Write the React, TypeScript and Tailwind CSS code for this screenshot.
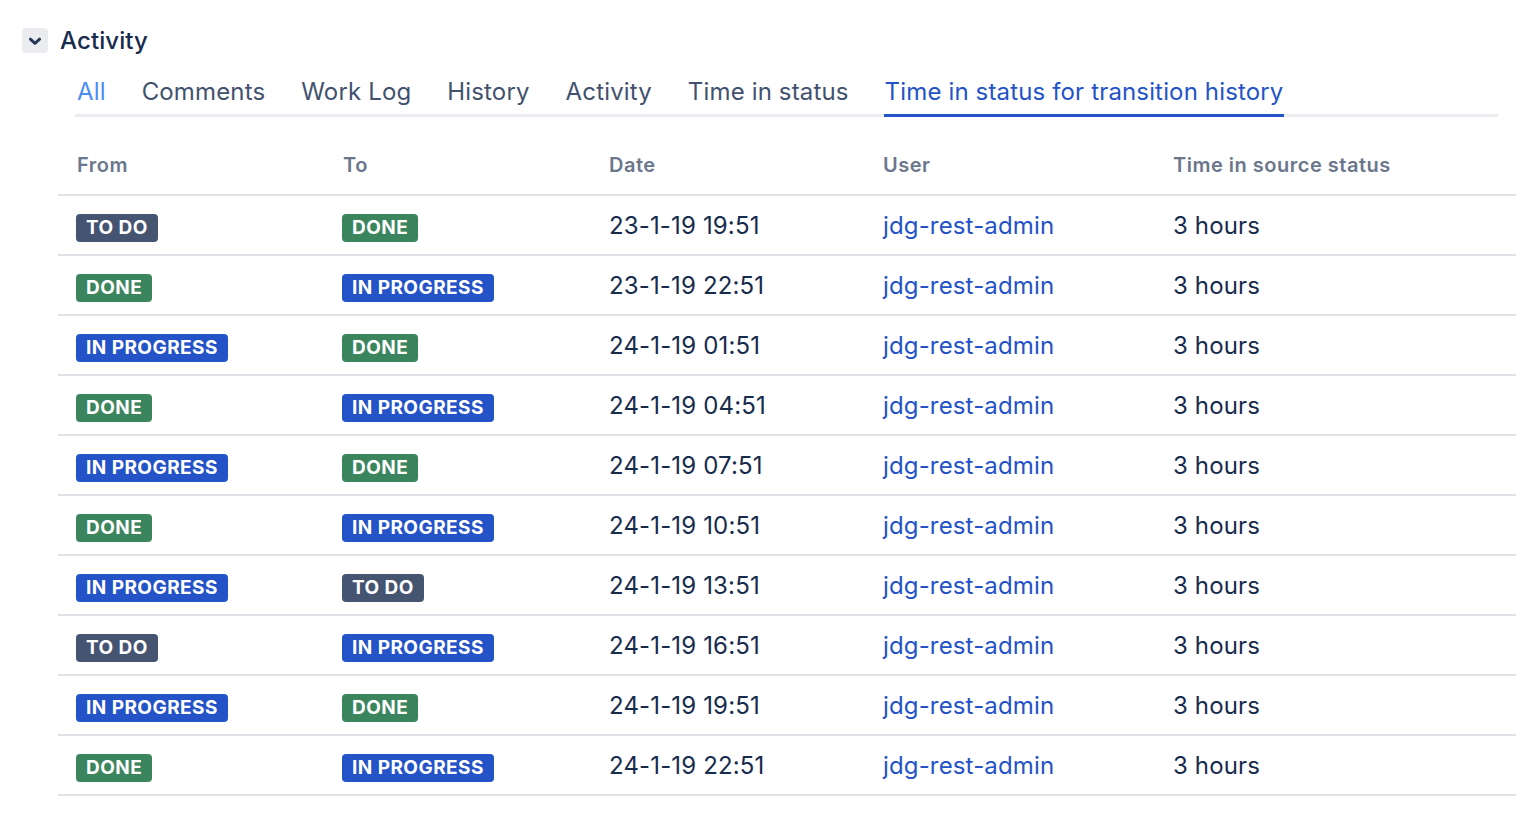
import React, { useState } from 'react';

type Status = 'TO DO' | 'DONE' | 'IN PROGRESS';

interface Transition {
  from: Status;
  to: Status;
  date: string;
}

const TABS = ['All', 'Comments', 'Work Log', 'History', 'Activity', 'Time in status', 'Time in status for transition history'];

const ROWS: Transition[] = [
  { from: 'TO DO', to: 'DONE', date: '23-1-19 19:51' },
  { from: 'DONE', to: 'IN PROGRESS', date: '23-1-19 22:51' },
  { from: 'IN PROGRESS', to: 'DONE', date: '24-1-19 01:51' },
  { from: 'DONE', to: 'IN PROGRESS', date: '24-1-19 04:51' },
  { from: 'IN PROGRESS', to: 'DONE', date: '24-1-19 07:51' },
  { from: 'DONE', to: 'IN PROGRESS', date: '24-1-19 10:51' },
  { from: 'IN PROGRESS', to: 'TO DO', date: '24-1-19 13:51' },
  { from: 'TO DO', to: 'IN PROGRESS', date: '24-1-19 16:51' },
  { from: 'IN PROGRESS', to: 'DONE', date: '24-1-19 19:51' },
  { from: 'DONE', to: 'IN PROGRESS', date: '24-1-19 22:51' },
];

const badgeColor: Record<Status, string> = {
  'TO DO': 'bg-[#455470]',
  DONE: 'bg-[#3b855e]',
  'IN PROGRESS': 'bg-[#2353c7]',
};

const Lozenge: React.FC<{ status: Status }> = ({ status }) => (
  <span
    className={`inline-flex items-center h-[28px] px-[10px] rounded-[4px] text-white text-[19px] font-bold leading-none tracking-[0.45px] ${badgeColor[status]}`}
  >
    {status}
  </span>
);

const cols = 'grid grid-cols-[266px_266px_274px_290px_1fr]';

export default function App() {
  const [active, setActive] = useState(TABS.length - 1);

  return (
    <div className="w-[1540px] h-[840px] bg-white font-['Inter',sans-serif] text-[#172b4d]">
      {/* Section header */}
      <div className="flex items-center gap-3 pl-[22px] pt-[28px]">
        <button className="w-[26px] h-[25px] rounded-[4px] bg-[#ebecf0] flex items-center justify-center text-[#253858]">
          <svg width="22" height="22" viewBox="0 0 24 24" fill="none" stroke="currentColor" strokeWidth={3.2} strokeLinecap="round" strokeLinejoin="round">
            <path d="M7 10l5 4.5 5-4.5" />
          </svg>
        </button>
        <h2 className="text-[24px] font-medium leading-[25px] tracking-[0.1px]">Activity</h2>
      </div>

      {/* Tabs */}
      <div className="ml-[75px] mr-[42px] mt-[24px] border-b-[3px] border-[#ebecf0] flex gap-[36px] pl-[2px]">
        {TABS.map((tab, i) => (
          <button
            key={tab}
            onClick={() => setActive(i)}
            className={`relative pb-[7px] text-[24px] leading-[30px] tracking-[0.15px] whitespace-nowrap ${
              i === active ? 'text-[#2353c7]' : i === 0 ? 'text-[#4c8cf5]' : 'text-[#42526e]'
            }`}
          >
            {tab}
            {i === active && <span className="absolute left-[-1px] right-0 bottom-[-3px] h-[3px] bg-[#2353c7]" />}
          </button>
        ))}
      </div>

      {/* Table */}
      <div className="ml-[58px] mr-[24px] mt-[17px]">
        <div className={`${cols} h-[62px] items-center border-b-2 border-[#dfe1e6] text-[20px] font-semibold tracking-[0.5px] text-[#6b778c] pt-[2px]`}>
          <div className="pl-[19px]">From</div>
          <div className="pl-[19px]">To</div>
          <div className="pl-[19px]">Date</div>
          <div className="pl-[19px]">User</div>
          <div className="pl-[19px]">Time in source status</div>
        </div>
        {ROWS.map((row, i) => (
          <div key={i} className={`${cols} h-[60px] items-center border-b-2 border-[#dfe1e6] text-[24px] tracking-[0.15px]`}>
            <div className="pl-[18px] pt-[2px]">
              <Lozenge status={row.from} />
            </div>
            <div className="pl-[18px] pt-[2px]">
              <Lozenge status={row.to} />
            </div>
            <div className="pl-[19px] pt-[2px]">{row.date}</div>
            <div className="pl-[19px] pt-[2px]">
              <a href="#" className="text-[#2353c7]">jdg-rest-admin</a>
            </div>
            <div className="pl-[19px] pt-[2px]">3 hours</div>
          </div>
        ))}
      </div>
    </div>
  );
}
